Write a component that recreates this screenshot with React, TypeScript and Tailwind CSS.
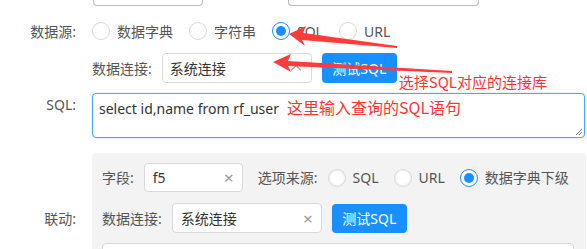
import React from "react";

const font = { fontFamily: '"Noto Sans", "Noto Sans CJK SC", sans-serif' };

function Radio({ checked, label, shaded }: { checked?: boolean; label: string; shaded?: boolean }) {
  return (
    <div className="flex items-center gap-[7px]">
      {checked ? (
        <span className="w-[18px] h-[18px] rounded-full border-[1.5px] border-[#1890ff] bg-white flex items-center justify-center">
          <span className="w-[10px] h-[10px] rounded-full bg-[#1890ff]" />
        </span>
      ) : (
        <span
          className={
            "w-[18px] h-[18px] rounded-full border border-[#d9d9d9] bg-white " +
            (shaded ? "shadow-[inset_0_0_3px_rgba(0,0,0,0.12)]" : "")
          }
        />
      )}
      <span className="text-[14px] text-[#555]">{label}</span>
    </div>
  );
}

export default function App() {
  return (
    <div className="relative w-[587px] h-[249px] overflow-hidden bg-white" style={font}>
      {/* cut top row: only the bottoms of two inputs are visible */}
      <div className="flex items-start h-[6px] pl-[93px] gap-[85px]">
        <div className="shrink-0 w-[110px] h-[6px] border-solid border-l border-r border-b border-[#bdbdbd] rounded-bl-[4px] rounded-br-[4px] bg-white" />
        <div className="shrink-0 w-[191px] h-[6px] border-solid border-l border-r border-b border-[#bdbdbd] rounded-bl-[4px] rounded-br-[4px] bg-white" />
      </div>

      {/* 数据源 */}
      <div className="flex items-center h-[30px] mt-[10px]">
        <div className="w-[92px] shrink-0 text-right pr-[16px] text-[14px] text-[#555]">数据源:</div>
        <div className="flex items-center gap-[16px]">
          <Radio label="数据字典" />
          <Radio label="字符串" />
          <Radio label="SQL" checked />
          <Radio label="URL" />
        </div>
      </div>

      {/* 数据连接 */}
      <div className="flex items-center h-[30px] mt-[7px] pl-[92px]">
        <span className="text-[14px] text-[#555] mr-[10px]">数据连接:</span>
        <div className="w-[150px] h-[30px] border border-[#d9d9d9] rounded-[4px] flex items-center justify-between px-[7px]">
          <span className="text-[14px] text-[#333]">系统连接</span>
          <svg width="12" height="8" viewBox="0 0 12 8" className="mr-[2px]">
            <path d="M1 6.5 L6 1.5 L11 6.5" fill="none" stroke="#aaa" strokeWidth="1.4" />
          </svg>
        </div>
        <button className="ml-[10px] w-[75px] h-[30px] rounded-[4px] bg-[#1890ff] text-white text-[14px]">测试SQL</button>
        <span className="ml-[2px] mt-[28px] text-[15px] text-[#ff3333] whitespace-nowrap" style={{ fontFamily: '"Noto Sans CJK SC", serif' }}>
          选择SQL对应的连接库
        </span>
      </div>

      {/* SQL */}
      <div className="flex items-start mt-[10px]">
        <div className="w-[92px] shrink-0 text-right pr-[16px] text-[14px] text-[#555] pt-[1px]">SQL:</div>
        <div className="relative w-[493px] h-[45px] border border-[#40a9ff] rounded-[4px] px-[6px] pt-[1px] bg-white shadow-[0_0_2px_rgba(24,144,255,0.3)] whitespace-nowrap">
          <span className="text-[14px] text-[#333]">select id,name from rf_user</span>
          <span className="text-[16px] text-[#ff3333] ml-[8px]" style={{ fontFamily: '"Noto Sans CJK SC", serif' }}>
            这里输入查询的SQL语句
          </span>
          <svg width="8" height="8" viewBox="0 0 8 8" className="absolute right-[1px] bottom-[1px]">
            <path d="M7 1 L1 7 M7 4 L4 7" stroke="#777" strokeWidth="1" />
          </svg>
        </div>
      </div>

      {/* 联动 panel */}
      <div className="flex items-center mt-[15px]">
        <div className="w-[92px] shrink-0 text-right pr-[16px] text-[14px] text-[#555]">联动:</div>
        <div className="w-[494px] h-[130px] bg-[#f3f3f3] rounded-[4px] pl-[10px] pt-[10px]">
          <div className="flex items-center h-[29px]">
            <span className="text-[14px] text-[#555] mr-[10px]">字段:</span>
            <div className="w-[99px] h-[29px] border border-[#d9d9d9] rounded-[4px] bg-white flex items-center justify-between px-[8px]">
              <span className="text-[14px] text-[#333]">f5</span>
              <span className="text-[17px] text-[#999] leading-none">×</span>
            </div>
            <span className="text-[14px] text-[#555] ml-[15px] mr-[10px]">选项来源:</span>
            <div className="flex items-center gap-[15px]">
              <Radio label="SQL" shaded />
              <Radio label="URL" shaded />
              <Radio label="数据字典下级" checked />
            </div>
          </div>
          <div className="flex items-center h-[30px] mt-[11px]">
            <span className="text-[14px] text-[#555] mr-[10px]">数据连接:</span>
            <div className="w-[150px] h-[30px] border border-[#d9d9d9] rounded-[4px] bg-white flex items-center justify-between px-[8px]">
              <span className="text-[14px] text-[#333]">系统连接</span>
              <span className="text-[17px] text-[#999] leading-none">×</span>
            </div>
            <button className="ml-[10px] w-[75px] h-[29px] rounded-[4px] bg-[#1890ff] text-white text-[14px]">测试SQL</button>
          </div>
          <div className="mt-[10px] w-[472px] h-[30px] border border-[#d9d9d9] rounded-[4px] bg-white" />
        </div>
      </div>

      {/* red arrows */}
      <svg className="absolute left-0 top-0 pointer-events-none" width="587" height="249">
        <polygon points="289,34 306,26 303,33 397,46 397,48 302,40 305,46" fill="#ff3b3b" />
        <polygon points="273,62 291,54 288,61 452,71 452,73 288,66 291,72" fill="#ff3b3b" />
      </svg>
    </div>
  );
}
